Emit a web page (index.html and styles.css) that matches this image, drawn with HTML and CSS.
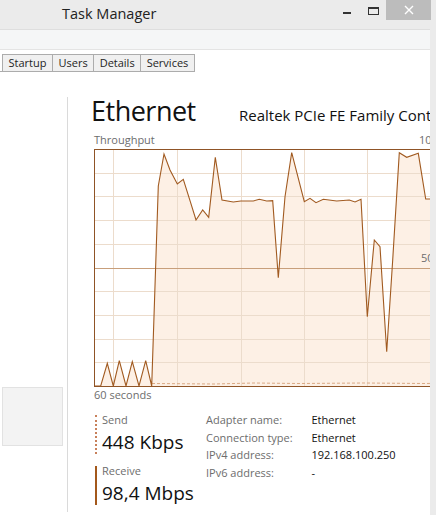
FILE: index.html
```html
<!DOCTYPE html>
<html lang="en">
<head>
<meta charset="utf-8">
<title>Task Manager</title>
<link rel="stylesheet" href="styles.css">
</head>
<body>
<div class="window">
  <header class="titlebar">
    <span class="title">Task Manager</span>
    <div class="controls">
      <span class="ctrl ctrl-min"><span class="min-glyph"></span></span>
      <span class="ctrl ctrl-max"><span class="max-glyph"></span></span>
      <span class="ctrl ctrl-close">
        <svg width="10" height="10" viewBox="0 0 10 10"><path d="M1 1L9 9M9 1L1 9" stroke="#fff" stroke-width="1.4" fill="none"/></svg>
      </span>
    </div>
  </header>
  <div class="client">
    <div class="menubar"></div>
    <nav class="tabs">
      <span class="tab">Startup</span>
      <span class="tab">Users</span>
      <span class="tab">Details</span>
      <span class="tab">Services</span>
    </nav>
    <main class="content">
      <aside class="sidebar">
        <div class="side-item"></div>
      </aside>
      <section class="panel">
        <div class="heading">
          <h1 class="heading-title">Ethernet</h1>
          <span class="heading-device">Realtek PCIe FE Family Controller</span>
        </div>
        <div class="chart-head">
          <span class="muted">Throughput</span>
          <span class="muted">100 Mbps</span>
        </div>
        <svg class="chart" width="376" height="238" viewBox="0 0 376 238">
          <rect x="0" y="0" width="376" height="238" fill="#fff"/>
          <path fill="#fdf0e5" d="M0,237 L6.7,237 L13.3,214.3 L19.3,237 L25.3,211.7 L32,237 L38.3,212.7 L45,237 L51.7,211.7 L57.7,237 L64.3,37 L70,5 L76,21 L83.3,35 L89.3,30.3 L96,51.7 L102,71 L108.7,61 L114.7,68.3 L121.3,8.3 L128,51 L139.3,53 L146.7,52 L159.3,52 L165.3,50.3 L172.7,52 L178.7,51.7 L184.3,128.7 L191,47.7 L197.7,3.7 L210.3,52.7 L216,49.3 L222,53.7 L229.3,50.3 L242.7,52 L255.3,51 L261,53 L267,50.3 L273.3,167.7 L280.3,91 L286,97.7 L292.7,202.7 L298.7,111 L305.3,3.7 L312.7,8.3 L324.3,4.3 L331.7,50 L376,50 L376,237 Z"/>
          <g stroke="#ecdccc" stroke-width="1">
            <path d="M19.5,0V238M83.5,0V238M147.5,0V238M210.5,0V238M273.5,0V238M337.5,0V238"/>
            <path d="M0,24.5H376M0,47.5H376M0,71.5H376M0,95.5H376M0,142.5H376M0,166.5H376M0,190.5H376M0,213.5H376"/>
          </g>
          <path d="M0,119.5H376" stroke="#c89f7b" stroke-width="1"/>
          <path d="M58,234.5 L120,235 L160,234 L205,234.5 L270,234 L330,234.5 L376,234" stroke="#dba983" stroke-width="1" stroke-dasharray="3 2" fill="none"/>
          <path fill="none" stroke="#a15a20" stroke-width="1.1" stroke-linejoin="miter" d="M0,237 L6.7,237 L13.3,214.3 L19.3,237 L25.3,211.7 L32,237 L38.3,212.7 L45,237 L51.7,211.7 L57.7,237 L64.3,37 L70,5 L76,21 L83.3,35 L89.3,30.3 L96,51.7 L102,71 L108.7,61 L114.7,68.3 L121.3,8.3 L128,51 L139.3,53 L146.7,52 L159.3,52 L165.3,50.3 L172.7,52 L178.7,51.7 L184.3,128.7 L191,47.7 L197.7,3.7 L210.3,52.7 L216,49.3 L222,53.7 L229.3,50.3 L242.7,52 L255.3,51 L261,53 L267,50.3 L273.3,167.7 L280.3,91 L286,97.7 L292.7,202.7 L298.7,111 L305.3,3.7 L312.7,8.3 L324.3,4.3 L331.7,50 L376,50"/>
          <rect x="0.5" y="0.5" width="375" height="237" fill="none" stroke="#8f5426" stroke-width="1"/>
          <text x="327" y="113" class="chart-label">50 Mbps</text>
        </svg>
        <div class="muted axis">60 seconds</div>
        <div class="stats">
          <div class="rates">
            <div class="rate rate-send">
              <div class="muted rate-label">Send</div>
              <div class="rate-value">448 Kbps</div>
            </div>
            <div class="rate rate-recv">
              <div class="muted rate-label">Receive</div>
              <div class="rate-value">98,4 Mbps</div>
            </div>
          </div>
          <dl class="info">
            <dt>Adapter name:</dt><dd>Ethernet</dd>
            <dt>Connection type:</dt><dd>Ethernet</dd>
            <dt>IPv4 address:</dt><dd>192.168.100.250</dd>
            <dt>IPv6 address:</dt><dd>-</dd>
          </dl>
        </div>
      </section>
    </main>
  </div>
</div>
</body>
</html>
```
FILE: styles.css
```css
* { box-sizing: border-box; }
html, body {
  margin: 0;
  padding: 0;
}
body {
  width: 436px;
  height: 515px;
  overflow: hidden;
  background: #ebebeb;
  font-family: "Open Sans", "Noto Sans", sans-serif;
  color: #1a1a1a;
}
.window {
  display: flex;
  flex-direction: column;
  height: 515px;
}
.titlebar {
  height: 29px;
  display: flex;
  align-items: flex-start;
  background: #ebebeb;
}
.title {
  padding-left: 62px;
  font-size: 14.5px;
  line-height: 27px;
  color: #222;
}
.controls {
  margin-left: auto;
  margin-right: 5px;
  display: flex;
}
.ctrl {
  height: 20px;
  display: flex;
  align-items: center;
  justify-content: center;
}
.ctrl-min { width: 27px; }
.ctrl-max { width: 26px; }
.ctrl-close { width: 45px; background: #bcbcbc; }
.min-glyph {
  width: 8px;
  height: 2px;
  margin-top: 6px;
  background: #333;
}
.max-glyph {
  width: 11px;
  height: 8px;
  margin-top: 1px;
  border: 1px solid #333;
  border-top-width: 2px;
}
.client {
  width: 430px;
  flex: 1;
  background: #fff;
  display: flex;
  flex-direction: column;
}
.menubar {
  height: 21px;
  background: #f5f6f7;
  border-top: 1px solid #dedede;
  border-bottom: 1px solid #e4e4e4;
}
.tabs {
  display: flex;
  align-self: flex-start;
  margin-top: 4px;
  padding-left: 2px;
  border-bottom: 1px solid #acacac;
}
.tab {
  padding: 0 5.5px;
  font-size: 11px;
  line-height: 16px;
  background: #f0f0f0;
  border: 1px solid #acacac;
  border-bottom: none;
  border-right: none;
  color: #1e1e1e;
}
.tab:last-child { border-right: 1px solid #acacac; }
.content {
  display: flex;
  align-items: flex-start;
  padding-top: 25px;
}
.sidebar {
  width: 68px;
  height: 415px;
  border-right: 1px solid #dadada;
  padding-top: 290px;
}
.side-item {
  margin-left: 2px;
  width: 61px;
  height: 59px;
  background: #f3f3f3;
  border: 1px solid #e2e2e2;
}
.panel {
  flex: 1;
  min-width: 0;
  height: 415px;
  overflow: hidden;
  padding-left: 26px;
}
.heading {
  display: flex;
  align-items: baseline;
  white-space: nowrap;
}
.heading-title {
  margin: 0 0 0 -3px;
  width: 148px;
  flex: none;
  font-size: 27px;
  font-weight: 400;
  letter-spacing: -0.5px;
  line-height: 28px;
  color: #111;
}
.heading-device {
  font-size: 15px;
  color: #111;
}
.muted { color: #6d6d6d; font-size: 11px; }
.chart-head {
  display: grid;
  grid-template-columns: 325px auto;
  margin-top: 6px;
  height: 18px;
  line-height: 18px;
  white-space: nowrap;
}
.chart { display: block; }
.chart-label {
  font-family: "Open Sans", "Noto Sans", sans-serif;
  font-size: 11px;
  fill: #6d6d6d;
}
.axis { line-height: 16px; }
.stats {
  display: flex;
  margin-top: 8px;
}
.rates {
  width: 112px;
  flex: none;
  padding-top: 4px;
  padding-left: 1px;
}
.rate {
  padding-left: 5px;
  border-left: 2px dotted #c8805a;
}
.rate-recv {
  margin-top: 12px;
  border-left: 2px solid #a3581b;
}
.rate-label { line-height: 10px; }
.rate-value {
  margin-top: 5px;
  font-size: 19px;
  line-height: 24px;
  color: #111;
  white-space: nowrap;
}
.info {
  margin: 0;
  display: grid;
  grid-template-columns: 105.5px auto;
  grid-auto-rows: 17.7px;
  font-size: 11px;
  line-height: 17.7px;
  white-space: nowrap;
}
.info dt { color: #6d6d6d; }
.info dd { margin: 0; color: #111; }
```
